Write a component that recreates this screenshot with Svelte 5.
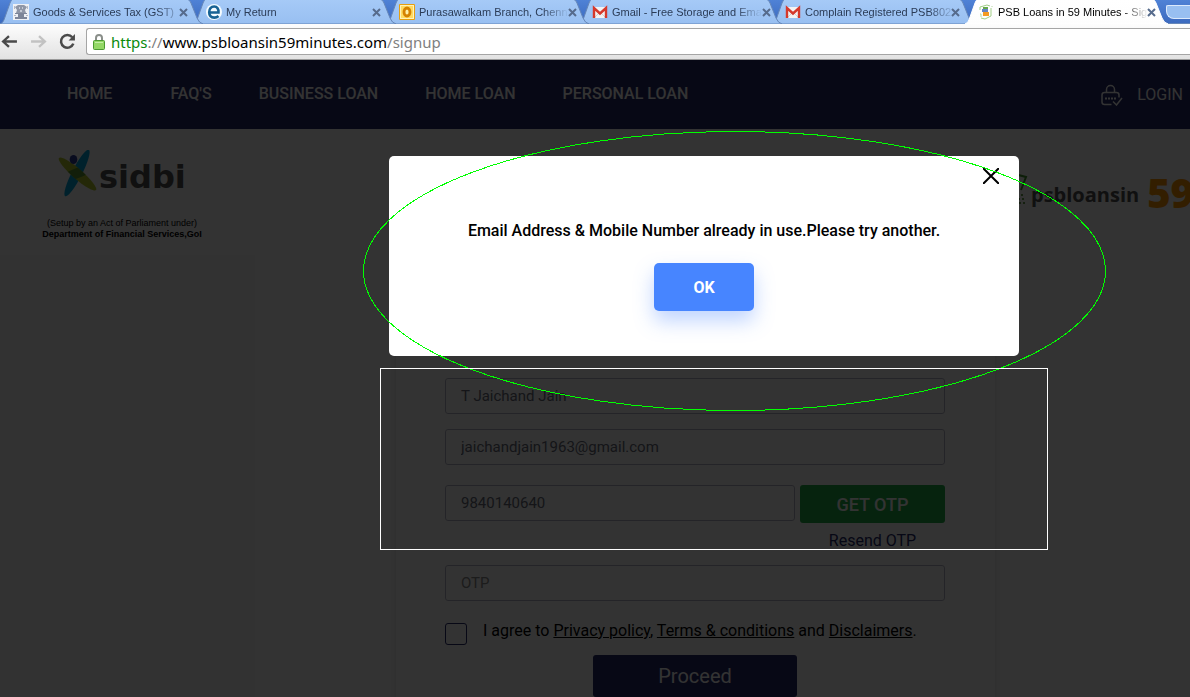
<script>
  const tabs = [
    { title: 'Goods & Services Tax (GST)', icon: 'emblem' },
    { title: 'My Return', icon: 'efile' },
    { title: 'Purasawalkam Branch, Chenn', icon: 'outlook' },
    { title: 'Gmail - Free Storage and Ema', icon: 'gmail' },
    { title: 'Complain Registered PSB802', icon: 'gmail' },
    { title: 'PSB Loans in 59 Minutes - Sig', icon: 'psb', active: true }
  ];
  const links = ['HOME', "FAQ'S", 'BUSINESS LOAN', 'HOME LOAN', 'PERSONAL LOAN'];
</script>

<div class="window">
  <header class="chrome">
    <div class="strip">
      {#each tabs as tab, i}
        <div class="tab" class:active={tab.active} style:z-index={tab.active ? 10 : 9 - i}>
          <svg class="shape" viewBox="0 0 206 24" preserveAspectRatio="none" aria-hidden="true">
            <defs>
              <linearGradient id="tab{i}" x1="0" y1="0" x2="0" y2="1">
                <stop offset="0" stop-color={tab.active ? '#ffffff' : '#a6caf7'} />
                <stop offset="1" stop-color={tab.active ? '#fdfdfd' : '#98bff1'} />
              </linearGradient>
            </defs>
            <path d="M0 24C3 23 4 20 5 17L10 3Q11 0 13 -1H187Q190 0 191 3L197 18Q199 23 203 24Z" fill="url(#tab{i})" stroke={tab.active ? '#ffffff' : '#6586b8'} />
          </svg>
          <svg class="favicon" viewBox="0 0 16 16" aria-hidden="true">
            {#if tab.icon === 'emblem'}
              <rect width="16" height="16" fill="#eef0f4" />
              <path d="M5 1h6l3 2-2 3 1 3H3l1-3-2-3z" fill="#8f96a6" />
              <path d="M6 3h1v2H6zM9 3h1v2H9zM7 6h2v2H7z" fill="#c4c9d4" />
              <path d="M2 9h12v1H2zM5 10h6v3H5zM2 13h12v2H2z" fill="#7d8598" />
              <path d="M1 2h1v3H1zM14 2h1v3h-1zM1 11h2v1H1zM13 11h2v1h-2z" fill="#b3b8c5" />
            {:else if tab.icon === 'efile'}
              <circle cx="8" cy="8" r="8" fill="#f5fbff" />
              <path d="M3.500 8.500H12.500C12.800 5 11.200 2.500 8.200 2.500C5 2.500 3.200 5 3.200 8.300C3.200 11.800 5.300 13.600 8.300 13.600C10 13.600 11.500 13 12.500 12" fill="none" stroke="#176294" stroke-width="2.600" />
            {:else if tab.icon === 'outlook'}
              <rect width="16" height="16" rx="1" fill="#e69f10" />
              <rect x="1.500" y="1.500" width="13" height="13" fill="#ffdb62" stroke="#fff2b8" />
              <ellipse cx="8" cy="8" rx="3" ry="4" fill="#fff0a8" stroke="#d58200" stroke-width="2.800" />
            {:else if tab.icon === 'gmail'}
              <rect x="1" y="3" width="14" height="11" fill="#f3f3f3" />
              <path d="M3 13L8 8l5 5" fill="none" stroke="#d0d0d0" />
              <path d="M2 14V4l6 5.500L14 4v10" fill="none" stroke="#d6392c" stroke-width="2.400" />
            {:else}
              <path d="M2 6V3l7-2 3 1M13 4v8l-6 3-4-1" fill="none" stroke="#a2cf88" />
              <path d="M5 3h5v2H5z" fill="#64a84c" />
              <path d="M4 5h6v3H4z" fill="#6585c5" />
              <path d="M5 8h6v4H5z" fill="#f49b22" />
              <path d="M2 10h1v3M14 2v1" fill="none" stroke="#b4d8a1" />
            {/if}
          </svg>
          <span class="title">{tab.title}</span>
          <button class="close-tab" aria-label="Close tab">
            <svg viewBox="0 0 9 9"><path d="M1 1l7 7M8 1L1 8" /></svg>
          </button>
        </div>
      {/each}
      <button class="new-tab" aria-label="New tab"></button>
    </div>

    <div class="toolbar">
      <button class="tool" aria-label="Back">
        <svg viewBox="0 0 16 16"><path d="M15 8H2M7.500 3L2 8l5.500 5" fill="none" stroke="#4a4a4a" stroke-width="2.200" /></svg>
      </button>
      <button class="tool" aria-label="Forward">
        <svg viewBox="0 0 16 16"><path d="M1 8h13M8.500 3L14 8l-5.500 5" fill="none" stroke="#c2c2c2" stroke-width="2.200" /></svg>
      </button>
      <button class="tool" aria-label="Reload">
        <svg viewBox="0 0 16 16"><path d="M12.500 4A6 6 0 1 0 13.500 10" fill="none" stroke="#4a4a4a" stroke-width="2.400" /><path d="M15 1v6H9z" fill="#4a4a4a" /></svg>
      </button>
      <div class="address">
        <svg class="lock" viewBox="0 0 12 16" aria-hidden="true">
          <path d="M3 8V4a3 3 0 0 1 6 0v4" fill="none" stroke="#8a8f8a" stroke-width="2" />
          <rect x=".5" y="6.500" width="11" height="9" rx="1" fill="#93d866" stroke="#4b9a32" />
          <path d="M2 8.500h8" stroke="#c4efa8" />
        </svg>
        <span class="url"><span class="scheme">https</span><span class="dim">://</span>www.psbloansin59minutes.com<span class="dim">/signup</span></span>
      </div>
    </div>
  </header>

  <div class="viewport">
    <nav class="nav">
      {#each links as link}
        <a href="#top">{link}</a>
      {/each}
      <a class="login" href="#login">
        <svg viewBox="0 0 22 22" aria-hidden="true">
          <path d="M5.500 8V5.500a4 4 0 0 1 8 0V8M10.500 20.500H3.500Q1 20.500 1 18V11Q1 8.500 3.500 8.500H15.500Q18 8.500 18 11V13.500M12 17.500l3.500 3.500L21 14" fill="none" stroke="#fff" stroke-width="1.500" />
          <path d="M4 14.500h11" stroke="#fff" stroke-width="2" stroke-dasharray="2 1" />
        </svg>
        LOGIN
      </a>
    </nav>

    <div class="brands">
      <div class="sidbi">
        <div class="mark">
          <svg viewBox="0 0 40 48" aria-hidden="true">
            <defs>
              <clipPath id="leaf"><ellipse cx="19" cy="23" rx="5" ry="26" transform="rotate(27 19 23)" /></clipPath>
            </defs>
            <ellipse cx="19" cy="23" rx="5" ry="26" transform="rotate(27 19 23)" fill="#00a5dc" />
            <ellipse cx="19.500" cy="24" rx="24.500" ry="5" transform="rotate(41 19.500 24)" fill="#b4c82b" />
            <ellipse cx="19.500" cy="24" rx="24.500" ry="5" transform="rotate(41 19.500 24)" fill="#5c9632" clip-path="url(#leaf)" />
            <ellipse cx="15.500" cy="9.500" rx="3.800" ry="4.500" fill="#303c9c" />
          </svg>
          <span>sidbi</span>
        </div>
        <p>(Setup by an Act of Parliament under)</p>
        <p class="dept">Department of Financial Services,GoI</p>
      </div>
      <div class="psb">
        <svg viewBox="0 0 26 40" aria-hidden="true">
          <path d="M2 0L21 5L16 18" fill="none" stroke="#41962d" stroke-width="2" />
          <path d="M13 27h8M14 31h6M16 23h3" stroke="#6aa052" stroke-width="2" stroke-dasharray="2 2" />
        </svg>
        <span class="name">psbloansin</span>
        <span class="num">59</span>
      </div>
    </div>

    <form class="panel" onsubmit={(e) => e.preventDefault()}>
      <input aria-label="Full name" type="text" value="T Jaichand Jain" />
      <input aria-label="Email address" type="email" value="jaichandjain1963@gmail.com" />
      <div class="otp-row">
        <input aria-label="Mobile number" type="tel" value="9840140640" />
        <div class="otp-actions">
          <button class="get" type="button">GET OTP</button>
          <a href="#resend">Resend OTP</a>
        </div>
      </div>
      <input aria-label="OTP" type="text" placeholder="OTP" />
      <div class="agree">
        <input id="agree" type="checkbox" />
        <label for="agree">I agree to <a href="#privacy">Privacy policy</a>, <a href="#terms">Terms &amp; conditions</a> and <a href="#disclaimers">Disclaimers</a>.</label>
      </div>
      <button class="proceed">Proceed</button>
    </form>

    <div class="backdrop">
      <div class="dialog" role="dialog" aria-modal="true" aria-labelledby="message">
        <button class="dismiss" aria-label="Close">
          <svg viewBox="0 0 16 16"><path d="M0 0l16 16M16 0L0 16" /></svg>
        </button>
        <p id="message">Email Address &amp; Mobile Number already in use.Please try another.</p>
        <button class="ok">OK</button>
      </div>
    </div>
  </div>

  <svg class="marks" width="1190" height="697" aria-hidden="true">
    <ellipse cx="734.500" cy="271" rx="371" ry="139.500" stroke="#00ff00" />
    <rect x="380.500" y="368.500" width="667" height="181" stroke="#fff" />
  </svg>
</div>

<style>
  :global(body) {
    margin: 0;
  }
  .window {
    position: relative;
    display: flex;
    flex-direction: column;
    height: 100vh;
    overflow: hidden;
    font-family: Roboto, sans-serif;
  }
  .window * {
    box-sizing: border-box;
  }
  button {
    margin: 0;
    padding: 0;
    border: 0;
    background: none;
    font-family: inherit;
  }
  a {
    color: inherit;
    text-decoration: none;
  }
  svg {
    display: block;
    flex: none;
  }
  p {
    margin: 0;
  }

  .chrome {
    flex: none;
    font-family: "Noto Sans", sans-serif;
  }
  .strip {
    display: flex;
    height: 24px;
    background: linear-gradient(#4f82d6, #3b69bd);
    box-shadow: inset 0 -1px #6586b8;
  }
  .tab {
    position: relative;
    display: flex;
    align-items: center;
    flex: none;
    width: 193px;
    padding-left: 13px;
    color: #2b3c57;
  }
  .active {
    color: #000;
  }
  .shape {
    position: absolute;
    left: 0;
    top: 0;
    width: 206px;
    height: 24px;
  }
  .favicon {
    position: relative;
    width: 16px;
    height: 16px;
    margin-right: 4px;
  }
  .title {
    position: relative;
    flex: 1;
    white-space: nowrap;
    font: 11px/16px "Liberation Sans", sans-serif;
    mask-image: linear-gradient(90deg, #000 124px, transparent 150px);
  }
  .close-tab {
    position: relative;
    width: 14px;
  }
  .close-tab svg {
    width: 9px;
    height: 9px;
  }
  .close-tab path {
    stroke: #566b8c;
    stroke-width: 2;
  }
  .new-tab {
    flex: 1;
    height: 14px;
    margin: 5px 0 0 8px;
    border: 1px solid #dbe9fc;
    border-right: 0;
    border-radius: 2px 0 0 8px;
    background: #98bff1;
  }
  .toolbar {
    display: flex;
    align-items: center;
    height: 36px;
    border-bottom: 1px solid #999;
    background: linear-gradient(#fdfdfd, #e2e2e2);
  }
  .tool {
    width: 29px;
    padding-left: 1px;
  }
  .tool svg {
    width: 17px;
    height: 17px;
  }
  .address {
    display: flex;
    align-items: center;
    flex: 1;
    height: 27px;
    margin-left: -1px;
    padding-left: 6px;
    border: 1px solid #a5a5a5;
    border-right: 0;
    border-radius: 3px 0 0 3px;
    background: #fff;
  }
  .lock {
    width: 12px;
    height: 16px;
    margin-right: 6px;
  }
  .url {
    color: #000;
    font-size: 15px;
    line-height: 24px;
  }
  .scheme {
    color: #0a8a0a;
  }
  .dim {
    color: #808080;
  }

  .viewport {
    position: relative;
    flex: 1;
    overflow: hidden;
    background: #fcfcfc;
  }
  .nav {
    display: flex;
    align-items: center;
    gap: 47px;
    height: 69px;
    padding: 0 7px 2px 67px;
    background: #232869;
    color: #fff;
    font-size: 16px;
    font-weight: 500;
    line-height: 20px;
  }
  .nav a:first-child {
    padding-right: 11px;
  }
  .nav .login {
    display: flex;
    align-items: center;
    gap: 14px;
    margin-left: auto;
    padding-top: 2px;
    font-weight: 400;
  }
  .login svg {
    width: 22px;
    height: 22px;
  }

  .brands {
    display: flex;
    justify-content: space-between;
    height: 121px;
    padding: 21px 0 0 41px;
  }
  .sidbi {
    width: 162px;
    color: #000;
    font: 9px/11px "Liberation Sans", sans-serif;
    text-align: center;
    white-space: nowrap;
  }
  .mark {
    display: flex;
    gap: 1px;
    height: 68px;
    padding-left: 17px;
    color: #505050;
  }
  .mark svg {
    width: 40px;
    height: 48px;
  }
  .mark span {
    font: bold 32px/54px "DejaVu Sans", sans-serif;
  }
  .dept {
    font-weight: bold;
  }
  .psb {
    display: flex;
    align-items: center;
    width: 185px;
    height: 84px;
    font-family: "Open Sans", sans-serif;
    white-space: nowrap;
  }
  .psb svg {
    width: 26px;
    height: 40px;
  }
  .name {
    padding-top: 4px;
    color: #505050;
    font-size: 20px;
    font-weight: 700;
  }
  .num {
    margin-left: 8px;
    color: #ff9800;
    font-size: 40px;
    font-weight: 800;
  }

  .panel {
    display: flex;
    flex-direction: column;
    gap: 15px;
    width: 599px;
    margin-left: 396px;
    padding: 128px 50px 60px 49px;
    background: #fff;
    box-shadow: 0 0 5px rgba(0, 0, 0, 0.1);
  }
  .panel > input,
  .otp-row > input {
    height: 36px;
    padding: 0 15px;
    border: 1px solid #b4b6c8;
    border-radius: 3px;
    background: #fff;
    color: #686a78;
    font: 15px Roboto, sans-serif;
  }
  .panel > input::placeholder {
    color: #8a8a8a;
  }
  .otp-row {
    display: flex;
    gap: 5px;
    margin-top: 5px;
  }
  .otp-row > input {
    flex: 1;
    min-width: 0;
  }
  .otp-actions {
    display: flex;
    flex-direction: column;
    align-items: center;
    width: 145px;
    height: 65px;
    gap: 8px;
    color: #232869;
    font-size: 16px;
    line-height: 20px;
  }
  .get {
    width: 100%;
    height: 38px;
    flex: none;
    border-radius: 3px;
    background: #20af46;
    color: #fff;
    font-size: 18px;
    font-weight: 500;
  }
  .agree {
    display: flex;
    align-items: flex-start;
    gap: 16px;
    height: 39px;
    padding-top: 5px;
    color: #000;
    font-size: 16px;
    line-height: 20px;
  }
  .agree input {
    appearance: none;
    width: 22px;
    height: 22px;
    margin: 2px 0 0;
    border: 1px solid #232869;
    border-radius: 3px;
  }
  .agree a {
    text-decoration: underline;
  }
  .proceed {
    align-self: center;
    width: 204px;
    height: 42px;
    margin-top: -15px;
    border-radius: 3px;
    background: #232869;
    color: #fff;
    font-size: 20px;
  }

  .backdrop {
    position: absolute;
    inset: 0;
    padding: 96px 0 0 389px;
    background: rgba(0, 0, 0, 0.8);
  }
  .dialog {
    display: flex;
    flex-direction: column;
    align-items: center;
    width: 630px;
    height: 200px;
    padding: 12px 20px;
    border-radius: 5px;
    background: #fff;
  }
  .dismiss {
    align-self: flex-end;
  }
  .dismiss svg {
    width: 16px;
    height: 16px;
  }
  .dismiss path {
    stroke: #000;
    stroke-width: 2;
  }
  #message {
    margin-top: 37px;
    color: #000;
    font-size: 16px;
    font-weight: 500;
    line-height: 20px;
  }
  .ok {
    width: 100px;
    height: 48px;
    margin-top: 22px;
    border-radius: 5px;
    background: #4785ff;
    box-shadow: 0 10px 20px rgba(71, 133, 255, 0.35);
    color: #fff;
    font-size: 16px;
    font-weight: 700;
  }
  .marks {
    position: absolute;
    left: 0;
    top: 0;
    z-index: 20;
    fill: none;
    pointer-events: none;
    shape-rendering: crispEdges;
  }
</style>
